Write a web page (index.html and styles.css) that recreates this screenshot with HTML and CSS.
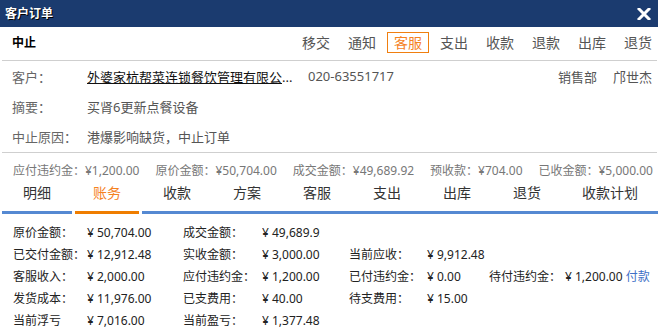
FILE: index.html
```html
<!DOCTYPE html>
<html lang="zh">
<head>
<meta charset="utf-8">
<title>客户订单</title>
<link rel="stylesheet" href="styles.css">
</head>
<body>
<div class="dialog">
  <div class="titlebar">
    <span class="title">客户订单</span>
    <svg class="close" width="14" height="12" viewBox="0 0 14 12"><path d="M2 1 L12 11 M12 1 L2 11" stroke="#fff" stroke-width="3" stroke-linecap="square"/></svg>
  </div>
  <div class="statusbar">
    <span class="status">中止</span>
    <div class="actions">
      <span class="act">移交</span>
      <span class="act">通知</span>
      <span class="act on">客服</span>
      <span class="act">支出</span>
      <span class="act">收款</span>
      <span class="act">退款</span>
      <span class="act">出库</span>
      <span class="act">退货</span>
    </div>
  </div>
  <div class="info">
    <div class="irow">
      <span class="ilabel">客户：</span>
      <span class="ival cust"><span class="link">外婆家杭帮菜连锁餐饮管理有限公</span>...</span>
      <span class="ival phone">020-63551717</span>
      <span class="ival dept">销售部</span>
      <span class="ival person">邝世杰</span>
    </div>
    <div class="irow">
      <span class="ilabel">摘要：</span>
      <span class="ival">买肾6更新点餐设备</span>
    </div>
    <div class="irow">
      <span class="ilabel">中止原因：</span>
      <span class="ival">港爆影响缺货，中止订单</span>
    </div>
  </div>
  <div class="summary">
    <span>应付违约金：¥1,200.00</span>
    <span>原价金额：¥50,704.00</span>
    <span>成交金额：¥49,689.92</span>
    <span>预收款：¥704.00</span>
    <span>已收金额：¥5,000.00</span>
  </div>
  <div class="tabs">
    <div class="tab"><span class="tlabel">明细</span><span class="tbar"></span></div>
    <div class="tab active"><span class="tlabel">账务</span><span class="tbar"></span></div>
    <div class="tab"><span class="tlabel">收款</span><span class="tbar"></span></div>
    <div class="tab"><span class="tlabel">方案</span><span class="tbar"></span></div>
    <div class="tab"><span class="tlabel">客服</span><span class="tbar"></span></div>
    <div class="tab"><span class="tlabel">支出</span><span class="tbar"></span></div>
    <div class="tab"><span class="tlabel">出库</span><span class="tbar"></span></div>
    <div class="tab"><span class="tlabel">退货</span><span class="tbar"></span></div>
    <div class="tab last"><span class="tlabel">收款计划</span><span class="tbar"></span></div>
  </div>
  <div class="details">
    <span>原价金额：</span><span>¥ 50,704.00</span>
    <span>成交金额：</span><span class="clip">¥ 49,689.92</span>
    <span></span><span></span><span></span><span></span>

    <span>已交付金额：</span><span>¥ 12,912.48</span>
    <span>实收金额：</span><span class="clip">¥ 3,000.00</span>
    <span>当前应收：</span><span>¥ 9,912.48</span>
    <span></span><span></span>

    <span>客服收入：</span><span>¥ 2,000.00</span>
    <span>应付违约金：</span><span class="clip">¥ 1,200.00</span>
    <span>已付违约金：</span><span>¥ 0.00</span>
    <span>待付违约金：</span><span>¥ 1,200.00 <span class="pay">付款</span></span>

    <span>发货成本：</span><span>¥ 11,976.00</span>
    <span>已支费用：</span><span class="clip">¥ 40.00</span>
    <span>待支费用：</span><span>¥ 15.00</span>
    <span></span><span></span>

    <span>当前浮亏</span><span>¥ 7,016.00</span>
    <span>当前盈亏：</span><span class="clip">¥ 1,377.48</span>
    <span></span><span></span><span></span><span></span>
  </div>
</div>
</body>
</html>
```

FILE: styles.css
```css
* { box-sizing: border-box; }
html, body {
  margin: 0;
  padding: 0;
  background: #fff;
  width: 658px;
  height: 331px;
  overflow: hidden;
}
body {
  font-family: "Noto Sans", "Noto Sans CJK SC", sans-serif;
  font-size: 12px;
  color: #333;
}
.dialog {
  display: flex;
  flex-direction: column;
  width: 658px;
}
.titlebar {
  height: 27px;
  background: #1b3b6f;
  display: flex;
  align-items: center;
  justify-content: space-between;
  padding: 0 7px 0 5px;
}
.title {
  color: #fff;
  font-weight: bold;
  font-size: 12px;
  text-shadow: 1px 1px 0 #000;
  line-height: 14px;
}
.close { display: block; }

.statusbar {
  height: 33px;
  display: flex;
  align-items: center;
  justify-content: space-between;
  padding: 0 0 3px 12px;
}
.status {
  font-weight: bold;
  font-size: 12px;
  color: #000;
}
.actions {
  display: flex;
  gap: 4px;
  margin-right: -1px;
}
.act {
  font-size: 14px;
  line-height: 19px;
  color: #555;
  padding: 0 6px;
  border: 1px solid transparent;
}
.act.on {
  color: #f5821f;
  border-color: #f07f10;
}

.info {
  margin: 0 1px 0 2px;
  border-top: 1px solid #cfcfcf;
  border-bottom: 1px solid #cfcfcf;
  padding-bottom: 1px;
  font-size: 13px;
  color: #666;
}
.irow {
  height: 30px;
  display: flex;
  align-items: center;
  padding-left: 10px;
}
.ilabel { width: 75px; }
.ival { color: #555; }
.cust { width: 221px; color: #222; }
.link { text-decoration: underline; color: #111; }
.phone { flex: 1; color: #555; }
.dept { margin-right: 16px; }
.person { margin-right: 5px; }

.summary {
  height: 31px;
  padding: 3px 5px 0 13px;
  display: flex;
  align-items: center;
  justify-content: space-between;
  color: #777;
  font-size: 12px;
}

.tabs {
  display: flex;
  padding-left: 2px;
}
.tab {
  width: 70px;
  display: flex;
  flex-direction: column;
  align-items: stretch;
}
.tab.last { flex: 1; }
.tlabel {
  height: 27px;
  line-height: 18px;
  text-align: center;
  font-size: 14px;
  color: #333;
}
.tbar {
  height: 3px;
  background: #5589d2;
}
.tab.active .tlabel { color: #f5821f; }
.tab.active .tbar {
  background: #ef7d00;
  margin: 0 3px;
}

.details {
  display: grid;
  grid-template-columns: 74px 96px 79px 87px 78px 62px 76px 1fr;
  grid-auto-rows: 22px;
  align-items: center;
  padding: 7px 0 0 13px;
  font-size: 12px;
  color: #222;
  white-space: nowrap;
}
.clip {
  display: block;
  width: 58px;
  overflow: hidden;
}
.pay { color: #3d6fc6; }
```
